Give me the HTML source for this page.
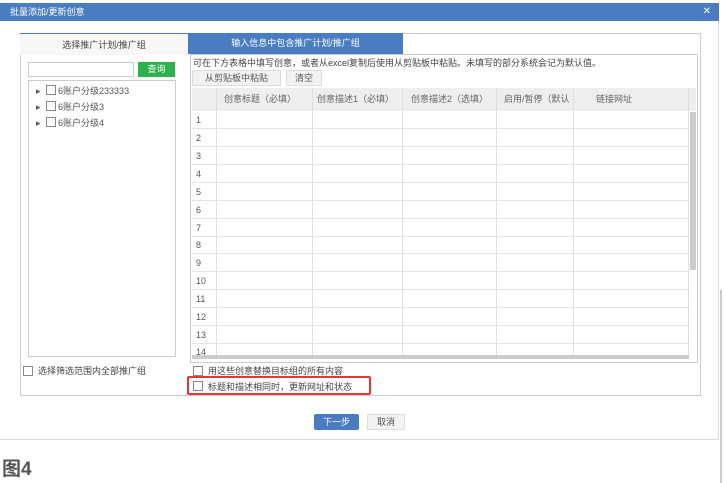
<!DOCTYPE html>
<html><head><meta charset="utf-8"><style>
*{margin:0;padding:0;box-sizing:border-box}
body{width:724px;height:483px;background:#fff;position:relative;overflow:hidden;font-family:"Liberation Sans","Noto Sans CJK SC",sans-serif;font-size:9px;color:#555}
.a{position:absolute}
.cb{position:absolute;width:10px;height:10px;border:1px solid #888;background:#fff}
.btn{position:absolute;border:1px solid #ddd;background:#f2f2f2;text-align:center;line-height:15px;color:#555}
</style></head><body>
<div class="a" style="left:0;top:3px;width:719px;height:18px;background:#4a7cc2;color:#fff;line-height:18px;padding-left:10px;font-size:9px">批量添加/更新创意<span style="position:absolute;right:8px;font-size:10px">✕</span></div>
<div class="a" style="left:718px;top:21px;width:1px;height:419px;background:#ddd"></div>
<div class="a" style="left:0;top:439px;width:719px;height:1px;background:#ddd"></div>
<div class="a" style="left:720px;top:290px;width:2px;height:193px;background:#ccc"></div>
<!-- outer panel -->
<div class="a" style="left:20px;top:33px;width:681px;height:363px;border:1px solid #ccc"></div>
<div class="a" style="left:20px;top:33px;width:168px;height:22px;background:#f7f7f7;border-top:1px solid #4a7cc2;text-align:center;line-height:22px;color:#444">选择推广计划/推广组</div>
<div class="a" style="left:188px;top:33px;width:215px;height:21px;background:#4a7cc2;color:#fff;text-align:center;line-height:21px">输入信息中包含推广计划/推广组</div>
<div class="a" style="left:28px;top:62px;width:106px;height:15px;border:1px solid #ccc"></div>
<div class="a" style="left:138px;top:62px;width:37px;height:15px;background:#2eb14b;color:#fff;text-align:center;line-height:15px">查询</div>
<div class="a" style="left:28px;top:80px;width:148px;height:277px;border:1px solid #ccc"></div>
<div class="a" style="left:36px;top:83px;line-height:16px;color:#555"><div>▸ &nbsp;<span style="display:inline-block;width:10px;height:10px;border:1px solid #888;vertical-align:-1px"></span> 6账户分级233333</div><div>▸ &nbsp;<span style="display:inline-block;width:10px;height:10px;border:1px solid #888;vertical-align:-1px"></span> 6账户分级3</div><div>▸ &nbsp;<span style="display:inline-block;width:10px;height:10px;border:1px solid #888;vertical-align:-1px"></span> 6账户分级4</div></div>
<!-- right inner -->
<div class="a" style="left:190px;top:54px;width:508px;height:309px;border:1px solid #ccc"></div>
<div class="a" style="left:193px;top:56px;color:#444;white-space:nowrap">可在下方表格中填写创意，或者从excel复制后使用从剪贴板中粘贴。未填写的部分系统会记为默认值。</div>
<div class="btn" style="left:192px;top:70px;width:89px;height:16px">从剪贴板中粘贴</div>
<div class="btn" style="left:286px;top:70px;width:36px;height:16px">清空</div>
<div class="a" style="left:192px;top:88px;width:504px;height:23px;background:#eee"></div>
<div class="a" style="left:192px;top:88px;height:23px;line-height:23px;width:504px;color:#666">
<span class="a" style="left:32px">创意标题（必填）</span><span class="a" style="left:125px">创意描述1（必填）</span><span class="a" style="left:219px">创意描述2（选填）</span><span class="a" style="left:312px;width:68px;overflow:hidden;white-space:nowrap">启用/暂停（默认</span><span class="a" style="left:404px">链接网址</span></div>
<svg class="a" style="left:192px;top:88px" width="505" height="272">
<g stroke="#e0e0e0" stroke-width="1">
<line x1="24.5" y1="0" x2="24.5" y2="267"/><line x1="120.5" y1="0" x2="120.5" y2="267"/><line x1="210.5" y1="0" x2="210.5" y2="267"/><line x1="304.5" y1="0" x2="304.5" y2="267"/><line x1="381.5" y1="0" x2="381.5" y2="267"/><line x1="496.5" y1="0" x2="496.5" y2="267"/>
</g>
<g stroke="#e4e4e4"><line x1="0" y1="40.5" x2="497" y2="40.5"/><line x1="0" y1="58.5" x2="497" y2="58.5"/><line x1="0" y1="76.5" x2="497" y2="76.5"/><line x1="0" y1="94.5" x2="497" y2="94.5"/><line x1="0" y1="112.5" x2="497" y2="112.5"/><line x1="0" y1="130.5" x2="497" y2="130.5"/><line x1="0" y1="148.5" x2="497" y2="148.5"/><line x1="0" y1="165.5" x2="497" y2="165.5"/><line x1="0" y1="183.5" x2="497" y2="183.5"/><line x1="0" y1="201.5" x2="497" y2="201.5"/><line x1="0" y1="219.5" x2="497" y2="219.5"/><line x1="0" y1="237.5" x2="497" y2="237.5"/><line x1="0" y1="255.5" x2="497" y2="255.5"/></g>
<rect x="498" y="24" width="6" height="158" fill="#ccc"/>
<rect x="0" y="267" width="497" height="4" fill="#ccc"/>
<g fill="#555" font-size="9" font-family="Liberation Sans"><text x="4" y="35">1</text><text x="4" y="53">2</text><text x="4" y="71">3</text><text x="4" y="89">4</text><text x="4" y="107">5</text><text x="4" y="125">6</text><text x="4" y="143">7</text><text x="4" y="160">8</text><text x="4" y="178">9</text><text x="4" y="196">10</text><text x="4" y="214">11</text><text x="4" y="232">12</text><text x="4" y="250">13</text><text x="4" y="267">14</text></g>
</svg>
<div class="cb" style="left:23px;top:366px"></div><div class="a" style="left:38px;top:364px;color:#444">选择筛选范围内全部推广组</div>
<div class="cb" style="left:193px;top:366px"></div><div class="a" style="left:208px;top:364px;color:#444">用这些创意替换目标组的所有内容</div>
<div class="a" style="left:187px;top:376px;width:184px;height:19px;border:2px solid #e33;border-radius:2px"></div>
<div class="cb" style="left:193px;top:381px"></div><div class="a" style="left:208px;top:380px;color:#444">标题和描述相同时，更新网址和状态</div>
<div class="a" style="left:314px;top:414px;width:45px;height:16px;background:#4a7cc2;color:#fff;text-align:center;line-height:16px;border-radius:2px">下一步</div>
<div class="btn" style="left:367px;top:414px;width:38px;height:16px">取消</div>
<div class="a" style="left:2px;top:459px;font-size:19px;font-weight:bold;color:#555;line-height:22px">图4</div>
</body></html>
